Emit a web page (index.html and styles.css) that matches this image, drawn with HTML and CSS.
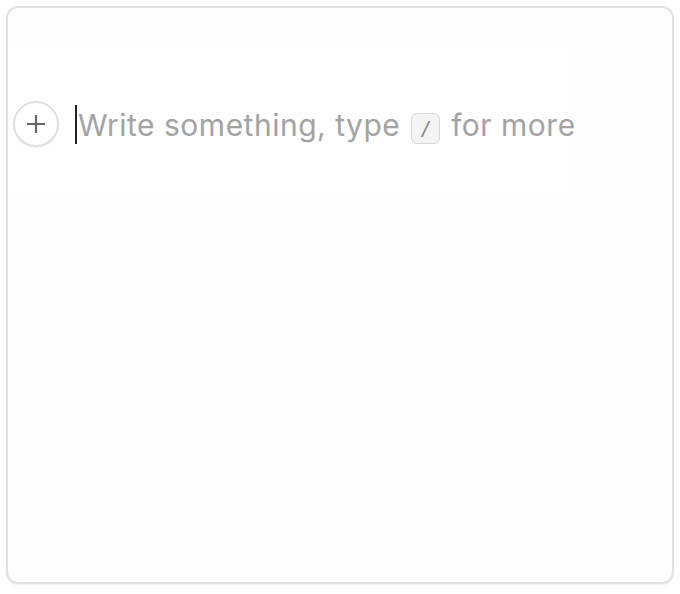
FILE: index.html
```html
<!DOCTYPE html>
<html>
<head>
<meta charset="utf-8">
<link rel="stylesheet" href="styles.css">
</head>
<body>
<div class="card">
  <div class="editor">
    <div class="line">
      <button class="add" aria-label="Add block">
        <svg width="20" height="20" viewBox="0 0 20 20"><path d="M10 1v18M1 10h18" stroke="#666" stroke-width="2.2" fill="none"/></svg>
      </button>
      <div class="text"><span class="caret"></span><span class="ph">Write something, type <kbd class="key">/</kbd> for more</span></div>
    </div>
  </div>
</div>
</body>
</html>
```
FILE: styles.css
```css
html, body { margin: 0; padding: 0; background: #ffffff; }
body { font-family: Inter, "Noto Sans", sans-serif; }
.card {
  margin: 6px;
  height: 574px;
  width: 664px;
  border: 2px solid #e2e2e2;
  border-radius: 12px;
  background: #fdfdfd;
  box-shadow: 0 1px 2px rgba(0,0,0,0.06);
}
.editor {
  margin-top: 37px;
  width: 567px;
  height: 150px;
  background: #fefefe;
  display: flex;
  align-items: center;
}
.line { display: flex; align-items: center; margin-top: 8px; }
.add {
  box-sizing: border-box;
  width: 46px; height: 46px;
  margin-left: 5px;
  border-radius: 50%;
  border: 2px solid #e0e0e0;
  background: #fff;
  display: flex; align-items: center; justify-content: center;
  padding: 0;
  box-shadow: 0 1px 2px rgba(0,0,0,0.05);
}
.add svg { display: block; }
.text { display: flex; align-items: center; margin-left: 16px; }
.caret { width: 2px; height: 39px; background: #222; margin-right: 1px; }
.ph { font-size: 30px; color: #a3a3a3; letter-spacing: 0.5px; white-space: nowrap; line-height: 39px; padding-top: 3px; }
.key {
  display: inline-block;
  overflow: hidden;
  box-sizing: border-box;
  width: 29px; height: 31px;
  border: 1.5px solid #d8d8d8;
  border-radius: 6px;
  background: #f4f4f4;
  font-family: "DejaVu Sans Mono", monospace;
  font-size: 20px;
  letter-spacing: 0;
  line-height: 28px;
  text-align: center;
  color: #8a8a8a;
  vertical-align: -8px;
  margin: 0 2px;
}
```
